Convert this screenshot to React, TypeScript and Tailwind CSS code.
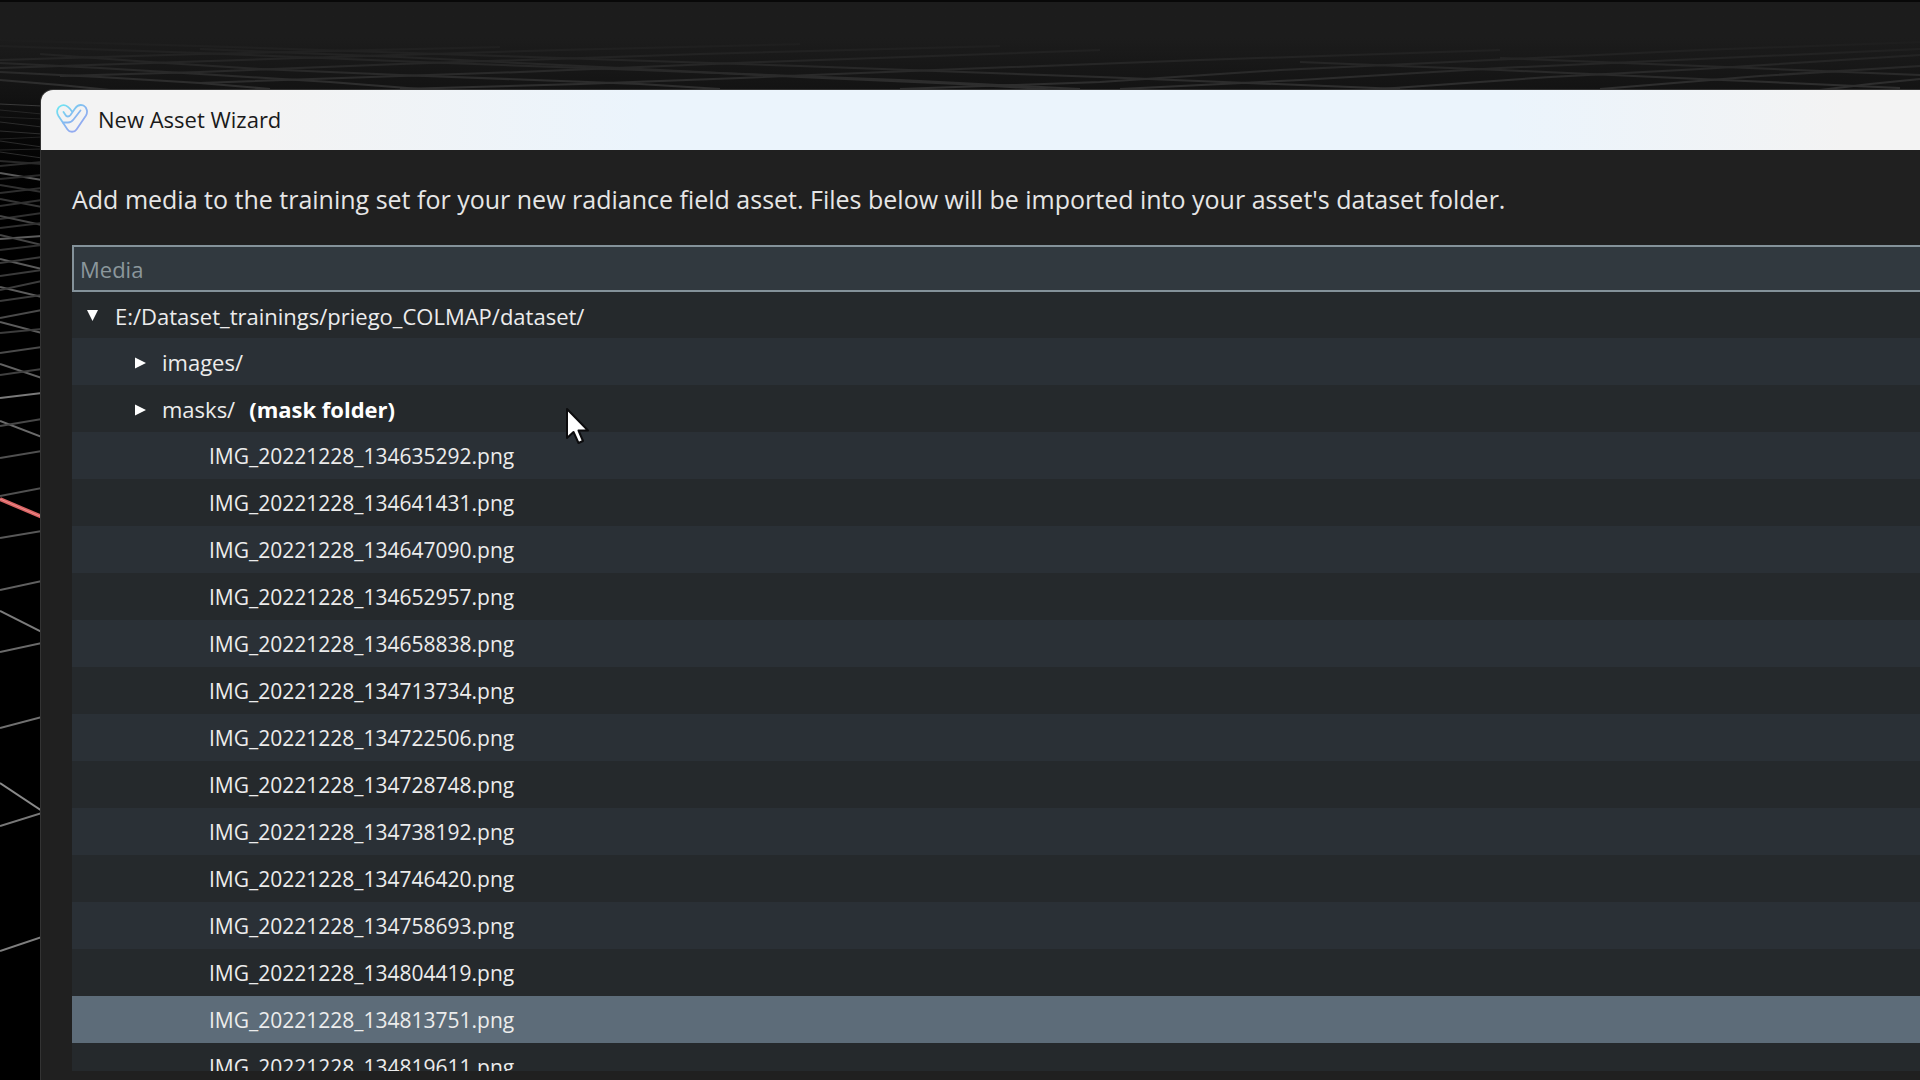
import { useState } from "react";

const folderRows = [
  { name: "E:/Dataset_trainings/priego_COLMAP/dataset/", note: "", open: true, layout: "h-[46px] pl-[13px]" },
  { name: "images/", note: "", open: false, layout: "h-[47px] pl-[60px]" },
  { name: "masks/", note: "(mask folder)", open: false, layout: "h-[47px] pl-[60px]" },
];

const files = [
  "IMG_20221228_134635292.png",
  "IMG_20221228_134641431.png",
  "IMG_20221228_134647090.png",
  "IMG_20221228_134652957.png",
  "IMG_20221228_134658838.png",
  "IMG_20221228_134713734.png",
  "IMG_20221228_134722506.png",
  "IMG_20221228_134728748.png",
  "IMG_20221228_134738192.png",
  "IMG_20221228_134746420.png",
  "IMG_20221228_134758693.png",
  "IMG_20221228_134804419.png",
  "IMG_20221228_134813751.png",
  "IMG_20221228_134819611.png",
];

// Each entry: y at the left edge, y at the window's edge, stroke colour.
const sideLines: [number, number, string][] = [
  [104, 106, "#3a3a3a"], [110, 114, "#262626"], [117, 119, "#222"], [122, 127, "#2c2c2c"],
  [131, 134, "#2e2e2e"], [139, 137, "#222"], [141, 147, "#2a2a2a"], [150, 149, "#262626"],
  [152, 158, "#2c2c2c"], [161, 164, "#282828"], [166, 162, "#2a2a2a"], [173, 180, "#5a5a5a"],
  [179, 175, "#2a2a2a"], [185, 192, "#303030"], [193, 188, "#2e2e2e"], [199, 207, "#363636"],
  [206, 200, "#303030"], [219, 213, "#303030"], [216, 225, "#444"], [228, 223, "#303030"],
  [239, 236, "#5c5c5c"], [235, 245, "#444"], [250, 245, "#303030"], [259, 269, "#5a5a5a"],
  [263, 257, "#3a3a3a"], [276, 270, "#3a3a3a"], [287, 297, "#5c5c5c"], [290, 281, "#3c3c3c"],
  [301, 295, "#3c3c3c"], [318, 310, "#4a4a4a"], [322, 333, "#5c5c5c"], [333, 329, "#3c3c3c"],
  [353, 347, "#4a4a4a"], [364, 378, "#626262"], [375, 369, "#404040"], [398, 393, "#7a7a7a"],
  [421, 437, "#6a6a6a"], [426, 419, "#484848"], [458, 451, "#505050"], [496, 488, "#505050"],
  [538, 531, "#585858"], [590, 581, "#606060"], [611, 632, "#7c7c7c"], [652, 643, "#6a6a6a"],
  [728, 717, "#707070"], [783, 811, "#8a8a8a"], [826, 813, "#787878"], [951, 937, "#7e7e7e"],
];

// Points of the faint floor-grid lines near the horizon.
const horizonLines = [
  "0,40 200,46 500,56 800,66 1100,77 1400,89",
  "0,46 200,53 420,62 640,70 900,80 1080,89",
  "200,49 400,57 600,67 800,77 960,84 1060,90",
  "40,54 150,62 260,69 400,75 640,84 720,89",
  "0,63 100,68 200,74 330,82 420,89",
  "0,72 100,77 200,83 270,89",
  "0,80 60,85 110,90",
  "0,60 200,54 500,47",
  "0,68 120,64 300,58 560,50 800,44",
  "60,76 200,72 400,64 700,54 1000,46",
  "200,83 400,76 520,72 760,62 1100,50",
  "400,89 580,84 740,78 960,69 1200,60 1500,50",
  "900,89 1100,82 1280,70 1450,62 1700,50 1920,42",
  "1120,89 1300,80 1500,68 1720,58 1920,49",
  "1380,89 1550,77 1700,69 1920,55",
  "1600,89 1760,76 1920,66",
  "1820,90 1870,84 1920,79",
  "1300,62 1500,70 1700,79 1900,88",
  "1500,58 1700,66 1920,75",
];

function Viewport() {
  return (
    <div className="absolute inset-0" aria-hidden="true">
      <div className="absolute inset-x-0 top-0 h-60 border-t-2 border-[#080808] bg-linear-to-b from-[#1c1c1c] from-15% via-[#121212] via-40% to-black" />
      <svg className="absolute top-0 left-0 h-[90px] w-full" viewBox="0 0 1920 90" preserveAspectRatio="none" fill="none">
        <defs>
          <linearGradient id="horizon" x1="0" y1="36" x2="0" y2="90" gradientUnits="userSpaceOnUse">
            <stop stopColor="#1b1b1b" />
            <stop offset="1" stopColor="#303030" />
          </linearGradient>
        </defs>
        {horizonLines.map((points) => (
          <polyline key={points} points={points} strokeWidth="2" stroke="url(#horizon)" />
        ))}
      </svg>
      <svg className="absolute top-0 left-0" width="42" height="1080" viewBox="0 0 42 1080" fill="none">
        {sideLines.map(([from, to, color]) => (
          <path key={`${from}-${to}`} d={`M0 ${from}L42 ${to}`} stroke={color} strokeWidth={from > 160 ? 2 : 1} />
        ))}
        <path d="M0 499L42 517" stroke="#d86464" strokeWidth="4" />
        <path d="M0 499L42 517" stroke="#f08c8c" strokeWidth="1" />
      </svg>
    </div>
  );
}

function Logo() {
  return (
    <svg className="size-8" viewBox="0 0 32 32" fill="none" strokeWidth="1.8" strokeLinejoin="round" strokeLinecap="round" aria-hidden="true">
      <defs>
        <linearGradient id="logo" x1="2" y1="3" x2="24" y2="30" gradientUnits="userSpaceOnUse">
          <stop stopColor="#6fe6f2" />
          <stop offset="0.5" stopColor="#86b8f0" />
          <stop offset="1" stopColor="#98a4f0" />
        </linearGradient>
      </defs>
      <g stroke="url(#logo)">
        <path d="M16 8.500C13 4 9.500 1 5.500 2.500C1 4.300 0 9 2.500 13L11.500 26.500C13.500 29.500 18.500 29.500 20.500 26.500L30 12.500C32 9 31 4.500 27.500 2.500C24 1.300 21 2.500 19 5.500L14.500 12C13 14 10.500 14 9.500 12L7.500 9" />
        <path d="M7 19.500H12C14.500 19.500 16 18.500 17.500 16.500L24.500 7.500" />
      </g>
    </svg>
  );
}

function Arrow({ open }: { open: boolean }) {
  return (
    <svg className="size-4" viewBox="0 0 16 16" fill="#fff" aria-hidden="true">
      {open ? <path d="M2 2H13L7.500 13Z" /> : <path d="M3 2.500L14 8L3 13.500Z" />}
    </svg>
  );
}

export default function App() {
  const [selected, setSelected] = useState(files[12]);
  return (
    <div className="relative flex h-screen flex-col overflow-hidden bg-black pt-[90px] pl-[41px] font-['Open_Sans',sans-serif]">
      <Viewport />
      <main className="relative flex min-h-0 flex-1 flex-col overflow-hidden rounded-tl-xl bg-[#202020] shadow-[0_0_0_1px_#333]">
        <header className="flex h-[60px] shrink-0 items-center gap-2.5 bg-[linear-gradient(90deg,#f3f3f3_12%,#ebf4fc_32%,#ebf4fc_78%,#f3f3f3_96%)] pb-0.5 pl-[15px]">
          <Logo />
          <h1 className="text-[22px] leading-8 text-[#1a1a1a]">New Asset Wizard</h1>
        </header>
        <section className="flex min-h-0 flex-1 flex-col pb-[9px] pl-[31px]">
          <label htmlFor="media" className="flex h-[95px] shrink-0 items-center pt-1 text-[25px] whitespace-nowrap text-[#e6e6e6]">
            Add media to the training set for your new radiance field asset. Files below will be imported into your asset's dataset folder.
          </label>
          <input
            id="media"
            type="text"
            placeholder="Media"
            className="h-[47px] shrink-0 border-2 border-r-0 border-[#84929a] bg-[#31393f] px-1.5 text-[22px] text-white outline-none placeholder:text-[#8b979c]"
          />
          <ul className="min-h-0 flex-1 overflow-hidden text-[#ececec]">
            {folderRows.map((row) => (
              <li key={row.name} className="odd:bg-[#25292c] even:bg-[#2a3036]">
                <button type="button" aria-expanded={row.open} className={`flex w-full items-center gap-3.5 pt-0.5 text-left text-[22px] ${row.layout}`}>
                  <Arrow open={row.open} />
                  <span>{row.name}</span>
                  {row.note && <strong className="font-bold text-white">{row.note}</strong>}
                </button>
              </li>
            ))}
            {files.map((name) => (
              <li key={name} className="odd:bg-[#25292c] even:bg-[#2a3036]">
                <button
                  type="button"
                  aria-pressed={selected === name}
                  onClick={() => setSelected(name)}
                  className="flex h-[47px] w-full items-center pt-0.5 pl-[137px] text-left text-[21px] aria-pressed:bg-[#5d6c79]"
                >
                  {name}
                </button>
              </li>
            ))}
          </ul>
        </section>
      </main>
      <svg className="absolute top-[405px] left-[563px]" width="28" height="42" viewBox="0 0 28 42" aria-hidden="true">
        <path d="M4 4V33L10.500 27L15.500 38L20 36L15.500 25.500H25Z" fill="#fff" stroke="#0c0c0e" strokeWidth="2" strokeLinejoin="round" />
      </svg>
    </div>
  );
}
